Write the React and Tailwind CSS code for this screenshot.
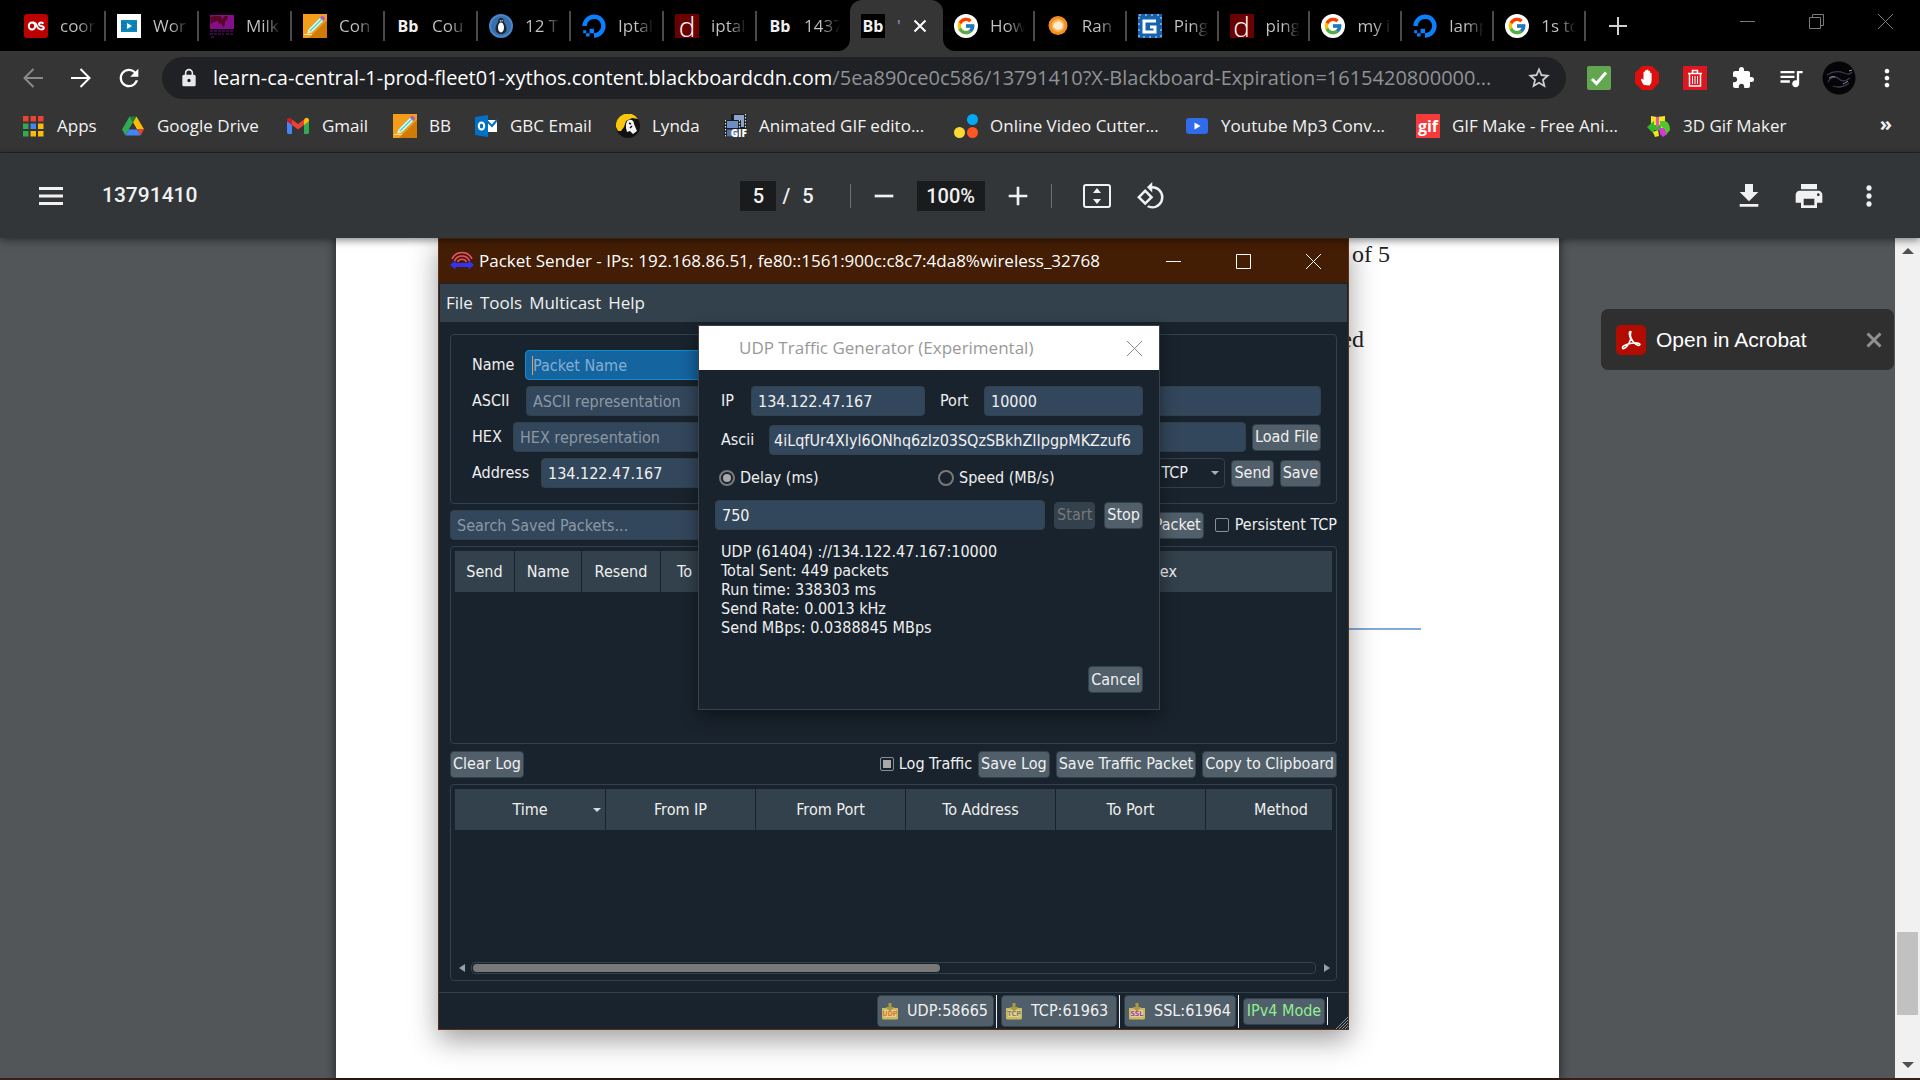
import React from "react";
import { FcGoogle } from "react-icons/fc";
import { FaDigitalOcean } from "react-icons/fa";
import {
  MdAdd,
  MdExtension,
  MdGetApp,
  MdLock,
  MdMoreVert,
  MdPrint,
  MdQueueMusic,
  MdRefresh,
  MdRemove,
  MdRotate90DegreesCcw,
  MdStarBorder,
} from "react-icons/md";

/* ---------- favicons ---------- */

const LastFm = () => (
  <span className="flex size-6 items-center justify-center rounded-[3px] bg-[#ba0000] text-white">
    <svg viewBox="0 0 24 24" className="size-6" fill="none" stroke="currentColor" strokeWidth="2">
      <ellipse cx="8" cy="12" rx="3.2" ry="3.600" />
      <path d="M19.400 9.600c-.5-.8-1.300-1.100-2.200-1.100-1.300 0-2.200.6-2.200 1.700 0 2.400 4.800 1.100 4.800 3.600 0 1.100-1 1.700-2.400 1.700-2.700 0-3.700-1.400-4.700-4-.7-1.900-1.800-3-3.900-3" />
    </svg>
  </span>
);

const PlayCard = () => (
  <svg viewBox="0 0 24 24" className="size-6">
    <rect width="24" height="24" fill="#fff" />
    <rect x="4" y="6" width="16" height="12" fill="#0e87bd" />
    <path d="M4 9h5M4 12h5M4 15h5M15 9h5M15 12h5M15 15h5" stroke="#0a6c9b" />
    <path d="M10 9v6l5-3z" fill="#fff" />
  </svg>
);

const Milk = () => (
  <svg viewBox="0 0 24 24" className="size-6">
    <rect x="0" y="1" width="24" height="14" fill="#850f8a" />
    <path d="M0 3l5-1h6l1 3 3-3h3l-1 4-2 1v4l-2 2-2-4-2 1-1-3-4 1-3 2z" fill="#5a0626" />
    <path d="M0 17h24M0 20h14M16 20h7M1 23h3" stroke="#4d0a55" strokeWidth="1.500" strokeDasharray="3 1" />
  </svg>
);

const Pencil = () => (
  <svg viewBox="0 0 24 24" className="size-6">
    <rect width="24" height="24" fill="#f59c1a" />
    <path d="M24 6v18H6z" fill="#cf7b06" />
    <path d="M4 20l1.500-5L17 3.500l3.500 3.500L9 18.500z" fill="#4fd6b8" />
    <path d="M6.500 15.500L17.500 4.500M8.500 17.500l11-11" stroke="#fff" strokeWidth="1.200" />
    <path d="M17 3.500l1.300-1.300a1.500 1.500 0 0 1 2 0l1.400 1.400a1.500 1.500 0 0 1 0 2L20.500 7z" fill="#b05bc4" />
    <path d="M4 20l1.500-5L9 18.500z" fill="#ffe3a8" />
    <path d="M1 20.500h8" stroke="#ffe3a8" />
  </svg>
);

const Bb = ({ boxed }) => (
  <span
    className={
      boxed
        ? "flex size-6 items-center justify-center bg-black text-base font-bold text-[#f0f0f0]"
        : "flex size-6 items-center justify-center text-base font-bold text-[#f0f0f0]"
    }
  >
    Bb
  </span>
);

const Penguin = () => (
  <svg viewBox="0 0 24 24" className="size-6">
    <circle cx="12" cy="12" r="12" fill="#4a86c8" />
    <circle cx="12" cy="12" r="10" fill="#3a6fae" />
    <path d="M12 4c-1.800 0-2.800 1.200-2.800 3 0 2-2.700 3.500-2.700 8 0 3.500 2.500 5 5.500 5s5.500-1.500 5.500-5c0-4.500-2.700-6-2.700-8 0-1.800-1-3-2.800-3z" fill="#1b2733" />
    <ellipse cx="12" cy="13.500" rx="3" ry="5" fill="#fff" />
    <path d="M10.800 6h.9v1.500h-.9zM12.700 6h.9v1.500h-.9z" fill="#fff" />
  </svg>
);

const Ocean = () => <FaDigitalOcean className="size-6 text-[#0a80ff]" />;

const LetterD = () => (
  <span className="flex size-6 items-center justify-center overflow-hidden bg-[#6b0000] font-['Open_Sans',sans-serif] text-[28px] leading-6 font-light text-white">
    d
  </span>
);

const Google = () => (
  <span className="flex size-6 items-center justify-center rounded-full bg-white">
    <FcGoogle className="size-5" />
  </span>
);

const Orange = () => (
  <svg viewBox="0 0 24 24" className="size-6">
    <circle cx="12" cy="11.500" r="9.500" fill="#f3901d" />
    <circle cx="12" cy="11.500" r="6.500" fill="#fbb65a" />
    <path d="M8 9l5-2 4 3-1 5-5 1-4-3z" fill="#fdebd0" />
  </svg>
);

const BlueG = () => (
  <svg viewBox="0 0 24 24" className="size-6">
    <rect width="24" height="24" fill="#1762ac" />
    <rect x="1" y="1" width="22" height="22" fill="none" stroke="#cfe2f5" strokeWidth="1" strokeDasharray="2 4" />
    <path d="M18 7H6v11h11v-5h-5" fill="none" stroke="#fff" strokeWidth="3" />
  </svg>
);

const TABS_LEFT = [
  { icon: LastFm, title: "coor" },
  { icon: PlayCard, title: "Wor" },
  { icon: Milk, title: "Milk" },
  { icon: Pencil, title: "Con" },
  { icon: Bb, title: "Cou" },
  { icon: Penguin, title: "12 T" },
  { icon: Ocean, title: "Iptal" },
  { icon: LetterD, title: "iptal" },
  { icon: Bb, title: "1437", last: true },
];

const TABS_RIGHT = [
  { icon: Google, title: "How" },
  { icon: Orange, title: "Ran" },
  { icon: BlueG, title: "Ping" },
  { icon: LetterD, title: "ping" },
  { icon: Google, title: "my i" },
  { icon: Ocean, title: "lamp" },
  { icon: Google, title: "1s to" },
];

function Tab({ icon: Icon, title, last }) {
  return (
    <button
      type="button"
      className={
        "flex h-[30px] min-w-0 flex-1 items-center gap-3 border-r-2 pr-2 pl-[11px] " +
        (last ? "border-transparent" : "border-[#4a4a4a]")
      }
    >
      <span className="shrink-0">
        <Icon />
      </span>
      <span className="min-w-0 flex-1 overflow-hidden bg-linear-to-r from-[#c4c4c4] from-50% to-transparent bg-clip-text text-left text-[17px] whitespace-nowrap text-transparent">
        {title}
      </span>
    </button>
  );
}

function TabStrip() {
  return (
    <div className="flex h-[51px] bg-black pl-[13px]">
      <div className="flex min-w-0 flex-[0_1_837px] items-center">
        {TABS_LEFT.map((t, i) => (
          <Tab key={i} {...t} />
        ))}
      </div>
      <div className="relative flex w-[93px] shrink-0 items-center gap-3 rounded-t-xl bg-[#353535] pl-[11px]">
        <svg viewBox="0 0 12 12" className="absolute bottom-0 -left-3 size-3 fill-[#353535]">
          <path d="M12 0v12H0A12 12 0 0 0 12 0z" />
        </svg>
        <svg viewBox="0 0 12 12" className="absolute -right-3 bottom-0 size-3 fill-[#353535]">
          <path d="M0 0v12h12A12 12 0 0 1 0 0z" />
        </svg>
        <Bb boxed />
        <span className="w-1 text-[17px] text-[#8f9bd0]">'</span>
        <button type="button" aria-label="Close tab">
          <svg viewBox="0 0 14 14" className="size-[14px]" stroke="#fff" strokeWidth="2">
            <path d="M1.500 1.500l11 11M12.500 1.500l-11 11" />
          </svg>
        </button>
      </div>
      <div className="flex min-w-0 flex-[0_1_643px] items-center">
        {TABS_RIGHT.map((t, i) => (
          <Tab key={i} {...t} />
        ))}
      </div>
      <button type="button" aria-label="New tab" className="ml-5 flex w-6 items-center justify-center">
        <svg viewBox="0 0 18 18" className="size-[18px]" stroke="#d0d0d0" strokeWidth="2">
          <path d="M9 0v18M0 9h18" />
        </svg>
      </button>
      <div className="ml-auto flex h-[42px] text-[#7a7a7a]">
        <button type="button" aria-label="Minimize" className="flex w-[69px] items-center justify-center">
          <svg viewBox="0 0 15 15" className="size-[15px]" stroke="currentColor">
            <path d="M0 7.500h15" />
          </svg>
        </button>
        <button type="button" aria-label="Restore" className="flex w-[69px] items-center justify-center">
          <svg viewBox="0 0 15 15" className="size-[15px]" stroke="currentColor" fill="none">
            <path d="M.5 3.500h11v11H.5zM3.500 3.500v-3h11v11h-3" />
          </svg>
        </button>
        <button type="button" aria-label="Close window" className="flex w-[69px] items-center justify-center">
          <svg viewBox="0 0 15 15" className="size-[15px]" stroke="currentColor">
            <path d="M0 0l15 15M15 0L0 15" />
          </svg>
        </button>
      </div>
    </div>
  );
}

/* ---------- address bar ---------- */

function AddressBar() {
  return (
    <div className="flex h-12 items-center px-[9px] pt-1.5">
      <button type="button" aria-label="Back" className="flex w-12 justify-center text-[#8a8a8a]">
        <svg viewBox="0 0 20 20" className="size-5" fill="none" stroke="currentColor" strokeWidth="2">
          <path d="M20 10H2M10.500 1L1.500 10l9 9" />
        </svg>
      </button>
      <button type="button" aria-label="Forward" className="flex w-12 justify-center text-white">
        <svg viewBox="0 0 20 20" className="size-5" fill="none" stroke="currentColor" strokeWidth="2">
          <path d="M0 10h18M9.500 1l9 9-9 9" />
        </svg>
      </button>
      <button type="button" aria-label="Reload" className="flex w-12 justify-center text-white">
        <MdRefresh className="size-7" />
      </button>
      <div className="ml-[9px] flex h-[42px] min-w-0 flex-1 items-center rounded-full bg-[#202124] pr-3.5 pl-[17px]">
        <MdLock className="size-5 shrink-0 text-[#e8e8e8]" />
        <span className="ml-3.5 min-w-0 flex-1 overflow-hidden text-[20px] whitespace-nowrap text-[#8f9296]">
          <span className="text-white">learn-ca-central-1-prod-fleet01-xythos.content.blackboardcdn.com</span>
          /5ea890ce0c586/13791410?X-Blackboard-Expiration=1615420800000...
        </span>
        <button type="button" aria-label="Bookmark this page" className="shrink-0">
          <MdStarBorder className="size-[26px] text-[#cfcfcf]" />
        </button>
      </div>
      <div className="ml-[9px] flex shrink-0 items-center text-white">
        <button type="button" aria-label="Check" className="flex w-12 justify-center">
          <svg viewBox="0 0 24 24" className="size-6">
            <rect width="24" height="24" rx="2" fill="#63a650" />
            <path d="M5 13l4.500 4.500L19 6.500" fill="none" stroke="#fff" strokeWidth="3" />
          </svg>
        </button>
        <button type="button" aria-label="Blocker" className="flex w-12 justify-center">
          <svg viewBox="0 0 24 24" className="size-6">
            <path d="M7 0h10l7 7v10l-7 7H7l-7-7V7z" fill="#e00f0f" />
            <path
              d="M9 19c-1.500-1.500-3-4.500-3-6 .8-.6 1.800 0 2.500 1V6.500c0-1.200 1.600-1.200 1.600 0V4.800c0-1.200 1.700-1.200 1.700 0V4.200c0-1.100 1.700-1.100 1.700 0v1.300c0-1 1.600-1 1.600 0v2c0-.9 1.500-.9 1.500 0V14c0 2.500-1 4-2 5.500z"
              fill="#fff"
            />
          </svg>
        </button>
        <button type="button" aria-label="Clear data" className="flex w-12 justify-center">
          <svg viewBox="0 0 24 24" className="size-6">
            <rect width="24" height="24" fill="#dd1620" />
            <path d="M5 7.500h14M9.500 7V4.500h5V7M6.500 8v12h11V8" fill="none" stroke="#fff" strokeWidth="1.500" />
            <path d="M9.500 10v8M12 10v8M14.500 10v8" stroke="#fff" />
          </svg>
        </button>
        <button type="button" aria-label="Extensions" className="flex w-12 justify-center">
          <MdExtension className="size-6" />
        </button>
        <button type="button" aria-label="Media" className="flex w-12 justify-center">
          <MdQueueMusic className="size-7" />
        </button>
        <button type="button" aria-label="Profile" className="flex w-12 justify-center">
          <svg viewBox="0 0 34 34" className="size-[34px]">
            <circle cx="17" cy="17" r="16.500" fill="#050507" />
            <path d="M5 14c6-4 12-4 17-2s6 1 8-1M6 21c3-6 8-6 11-3s7 2 11-1M11 25c5 2 12 1 16-3" fill="none" stroke="#3a3a52" strokeWidth="1.300" />
            <path d="M7 17c2-1 4-2 6-1M21 23c2-1 4-2 5-3M27 10l3-1" fill="none" stroke="#9a9ab0" />
          </svg>
        </button>
        <button type="button" aria-label="Menu" className="flex w-12 justify-center">
          <MdMoreVert className="size-7" />
        </button>
      </div>
    </div>
  );
}

/* ---------- bookmarks ---------- */

const AppsIcon = () => (
  <svg viewBox="0 0 24 24" className="size-6">
    {["#ea4335", "#ea4335", "#ea4335", "#34a853", "#4285f4", "#fbbc05", "#34a853", "#fbbc05", "#fbbc05"].map((c, i) => (
      <rect key={i} x={2 + (i % 3) * 7.500} y={2 + Math.floor(i / 3) * 7.500} width="5.500" height="5.500" fill={c} />
    ))}
  </svg>
);

const DriveIcon = () => (
  <svg viewBox="0 0 24 24" className="size-6">
    <path d="M8.500 2.500h7L12 8.600z" fill="#188038" />
    <path d="M8.500 2.500L12 8.600 4.500 21.500 1 15.400z" fill="#34a853" />
    <path d="M15.500 2.500L12 8.600l3.800 6.700H23z" fill="#fbbc04" />
    <path d="M23 15.300h-7.200l3.700 6.200z" fill="#ea4335" />
    <path d="M8.200 15.300h7.600l3.700 6.200h-15z" fill="#4285f4" />
    <path d="M12 8.600l3.800 6.700H8.200z" fill="#353535" />
  </svg>
);

const GmailIcon = () => (
  <svg viewBox="0 0 24 24" className="size-6">
    <path d="M1 7v11.500c0 .9.600 1.500 1.500 1.500H6V10z" fill="#4285f4" />
    <path d="M18 10v10h3.500c.9 0 1.500-.6 1.500-1.500V7z" fill="#34a853" />
    <path d="M18 5.500V11l5-3.700V6c0-2-2.200-3-3.800-1.800z" fill="#fbbc04" />
    <path d="M6 11V5.500l6 4.500 6-4.500V11l-6 4.500z" fill="#ea4335" />
    <path d="M1 6v1.300L6 11V5.500L4.800 4.200C3.200 3 1 4 1 6z" fill="#c5221f" />
  </svg>
);

const OutlookIcon = () => (
  <svg viewBox="0 0 24 24" className="size-6">
    <path d="M13 6h10v12H13z" fill="#fff" />
    <path d="M13 7l5 5 5-6" stroke="#0072c6" strokeWidth="2" fill="none" />
    <path d="M1 3l13-2v22L1 21z" fill="#0072c6" />
    <ellipse cx="7.500" cy="12" rx="2.700" ry="3.600" fill="none" stroke="#fff" strokeWidth="2" />
  </svg>
);

const LyndaIcon = () => (
  <svg viewBox="0 0 24 24" className="size-6">
    <circle cx="12" cy="12" r="12" fill="#111" />
    <path d="M0 13A12 12 0 0 1 22 5l-6-1-6 3-2 6-3 4H2z" fill="#f9c80e" />
    <path d="M13 6c3-1 5 1 5 4l3 7-4 3-3-3-3 1-1-4c0-4 0-7 3-8z" fill="#f5f5f5" />
    <path d="M13 9l2 1M16 12l-2 2" stroke="#111" strokeWidth="1.500" />
  </svg>
);

const GifFilmIcon = () => (
  <span className="relative flex size-6 items-end justify-end">
    <svg viewBox="0 0 24 24" className="absolute inset-0 size-6">
      <rect x="8" y="0" width="16" height="15" fill="#1c1c1c" />
      <rect x="11" y="1" width="10" height="12" fill="#8aa4cf" />
      <rect x="1" y="6" width="17" height="17" fill="#1c1c1c" />
      <rect x="4" y="7" width="11" height="7" fill="#6d8ec4" />
      <rect x="4" y="15.500" width="11" height="7" fill="#55719f" />
      <path d="M2.500 6v17M16.500 6v9M22.500 0v15" stroke="#ddd" strokeWidth="1.200" strokeDasharray="1.500 1.500" />
    </svg>
    <span className="relative text-[10px] leading-[10px] font-extrabold text-white">GIF</span>
  </span>
);

const DotsIcon = () => (
  <svg viewBox="0 0 24 24" className="size-6">
    <circle cx="18.500" cy="5.500" r="5.500" fill="#03a9f4" />
    <circle cx="5.500" cy="18.500" r="5.500" fill="#fdd835" />
    <circle cx="18.500" cy="18.500" r="5.500" fill="#ff5722" />
  </svg>
);

const VideoIcon = () => (
  <svg viewBox="0 0 24 24" className="size-6">
    <rect x="1" y="4" width="22" height="16" rx="3" fill="#2f6bea" />
    <path d="M9.500 8.500v7l6-3.500z" fill="#fff" />
  </svg>
);

const GifIcon = () => (
  <span className="flex size-6 items-center justify-center bg-[#f43a3a] text-base leading-6 font-bold text-white">gif</span>
);

const KnotIcon = () => (
  <svg viewBox="0 0 24 24" className="size-6">
    <path d="M4 2l6 1 8-1v12l-4 1-5-2-5 1z" fill="#f7e51b" />
    <path d="M0 13l7-6v4h7v5H7v4z" fill="#35b52a" />
    <path d="M13 7h4c5 0 6 6 6 9l-4 5-5-5 2 0c0-3-1-4-3-4z" fill="#53c62c" />
    <path d="M12 14h5l3 6-4 3-3-3z" fill="#d53ad5" />
    <path d="M6 18l5-2 1 6-4 1z" fill="#f7e51b" />
    <path d="M9 3l3 0v9l-3 1z" fill="#e055c0" />
  </svg>
);

const BOOKMARKS = [
  { icon: AppsIcon, label: "Apps", w: "w-[100px]" },
  { icon: DriveIcon, label: "Google Drive", w: "w-[165px]" },
  { icon: GmailIcon, label: "Gmail", w: "w-[107px]" },
  { icon: Pencil, label: "BB", w: "w-[81px]" },
  { icon: OutlookIcon, label: "GBC Email", w: "w-[142px]" },
  { icon: LyndaIcon, label: "Lynda", w: "w-[107px]" },
  { icon: GifFilmIcon, label: "Animated GIF edito...", w: "w-[231px]" },
  { icon: DotsIcon, label: "Online Video Cutter...", w: "w-[231px]" },
  { icon: VideoIcon, label: "Youtube Mp3 Conv...", w: "w-[231px]" },
  { icon: GifIcon, label: "GIF Make - Free Ani...", w: "w-[231px]" },
  { icon: KnotIcon, label: "3D Gif Maker", w: "w-[150px]" },
];

function Bookmarks() {
  return (
    <div className="flex h-[54px] items-center border-b border-[#232323] pr-7 pl-[21px] text-[17px] text-[#f2f2f2]">
      {BOOKMARKS.map(({ icon: Icon, label, w }) => (
        <a key={label} href="#" className={"flex shrink-0 items-center gap-3 whitespace-nowrap " + w}>
          <Icon />
          {label}
        </a>
      ))}
      <button type="button" aria-label="More bookmarks" className="ml-auto pb-1 text-xl font-bold">
        »
      </button>
    </div>
  );
}

/* ---------- PDF toolbar ---------- */

function PdfToolbar() {
  return (
    <div className="relative z-10 grid h-[85px] grid-cols-[1fr_auto_1fr] items-center bg-[#323639] px-[33px] font-['Roboto',sans-serif] text-[20px] font-medium text-[#f1f1f1] shadow-[0_2px_8px_rgba(0,0,0,0.5)]">
      <div className="flex items-center">
        <button type="button" aria-label="Outline" className="mr-[33px] flex w-9 justify-center">
          <svg viewBox="0 0 24 18" className="h-[18px] w-6" stroke="currentColor" strokeWidth="3">
            <path d="M0 1.500h24M0 9h24M0 16.500h24" />
          </svg>
        </button>
        <span className="text-[21px]">13791410</span>
      </div>
      <div className="mr-3.5 flex items-center">
        <input aria-label="Page" defaultValue="5" className="h-[30px] w-9 bg-[#191b1c] text-center outline-none" />
        <span className="ml-1.5">/</span>
        <span className="ml-3">5</span>
        <span className="ml-9 h-6 w-px bg-[#6d7073]" />
        <button type="button" aria-label="Zoom out" className="ml-[17px] flex w-8 justify-center">
          <MdRemove className="size-8" />
        </button>
        <input aria-label="Zoom" defaultValue="100%" className="ml-[17px] h-[30px] w-[68px] bg-[#191b1c] text-center outline-none" />
        <button type="button" aria-label="Zoom in" className="ml-[17px] flex w-8 justify-center">
          <MdAdd className="size-8" />
        </button>
        <span className="ml-[17px] h-6 w-px bg-[#6d7073]" />
        <button type="button" aria-label="Fit to page" className="ml-[31px]">
          <svg viewBox="0 0 28 24" className="h-6 w-7" fill="none" stroke="currentColor" strokeWidth="2">
            <rect x="1" y="1" width="26" height="22" rx="2" />
            <path d="M14 4l4 5h-8zM14 20l4-5h-8z" fill="currentColor" stroke="none" />
          </svg>
        </button>
        <button type="button" aria-label="Rotate" className="ml-[25px]">
          <MdRotate90DegreesCcw className="size-[30px]" />
        </button>
      </div>
      <div className="flex items-center justify-end">
        <button type="button" aria-label="Download" className="flex w-[60px] justify-center">
          <MdGetApp className="size-8" />
        </button>
        <button type="button" aria-label="Print" className="flex w-[60px] justify-center">
          <MdPrint className="size-8" />
        </button>
        <button type="button" aria-label="More actions" className="-mr-3 flex w-[60px] justify-center">
          <MdMoreVert className="size-8" />
        </button>
      </div>
    </div>
  );
}

/* ---------- Packet Sender ---------- */

const field =
  "h-[30px] min-w-0 rounded-[4px] border border-[#32414b] bg-[#33475c] px-1.5 text-base text-[#f0f0f0] outline-none placeholder:text-[#8b98a4]";

function Btn({ children, disabled }) {
  return (
    <button
      type="button"
      disabled={disabled}
      className="h-[27px] shrink-0 rounded-[4px] border border-[#32414b] bg-[#505f69] px-0.5 text-base leading-6 whitespace-nowrap text-[#f0f0f0] disabled:bg-[#32414b] disabled:text-[#787878]"
    >
      {children}
    </button>
  );
}

function PacketForm() {
  return (
    <form className="flex flex-col gap-1.5 rounded-[4px] border border-[#32414b] pt-[15px] pr-[15px] pb-[15px] pl-[21px]">
      <div className="relative flex items-center">
        <label htmlFor="p-name" className="w-[53px]">Name</label>
        <input
          id="p-name"
          placeholder="Packet Name"
          className="h-[30px] w-[500px] rounded-[4px] border border-[#148cd2] bg-[#1464a0] px-[7px] text-base outline-none placeholder:text-[#84aed0]"
        />
        <span className="absolute top-1.5 left-[60px] h-[19px] w-px bg-[#f29a4a]" />
      </div>
      <div className="flex items-center">
        <label htmlFor="p-ascii" className="w-[54px]">ASCII</label>
        <input id="p-ascii" placeholder="ASCII representation" className={field + " flex-1"} />
      </div>
      <div className="flex items-center">
        <label htmlFor="p-hex" className="w-[41px]">HEX</label>
        <input id="p-hex" placeholder="HEX representation" className={field + " mr-1.5 flex-1"} />
        <Btn>Load File</Btn>
      </div>
      <div className="flex items-center gap-1.5">
        <label htmlFor="p-addr" className="w-[63px]">Address</label>
        <input id="p-addr" defaultValue="134.122.47.167" className={field + " flex-1"} />
        <span className="relative flex">
          <select aria-label="Protocol" className="h-[30px] w-[78px] appearance-none rounded-[4px] border border-[#32414b] bg-[#19232d] pl-[13px] outline-none">
            <option>TCP</option>
          </select>
          <svg viewBox="0 0 8 4" className="absolute top-[13px] right-1.5 h-1 w-2 fill-[#a8b0b6]">
            <path d="M0 0h8L4 4z" />
          </svg>
        </span>
        <Btn>Send</Btn>
        <Btn>Save</Btn>
      </div>
    </form>
  );
}

const th = "h-[41px] border-r border-[#19232d] bg-[#32414b] p-0 text-center font-normal last:border-r-0";

function SavedPackets() {
  return (
    <div className="mt-1.5 h-[198px] rounded-[4px] border border-[#32414b] p-1">
      <table className="w-full table-fixed border-separate border-spacing-0">
        <thead>
          <tr>
            <th className={th + " w-[60px]"}>Send</th>
            <th className={th + " w-[67px]"}>Name</th>
            <th className={th + " w-[79px]"}>Resend</th>
            <th className={th + " w-[48px]"}>To</th>
            <th className={th + " w-[285px]"} aria-label="Details" />
            <th className={th}>Hex</th>
          </tr>
        </thead>
      </table>
    </div>
  );
}

function TrafficLog() {
  return (
    <div className="flex h-[197px] flex-col rounded-[4px] border border-[#32414b] p-1">
      <div className="overflow-hidden">
        <table className="w-[901px] table-fixed border-separate border-spacing-0">
          <thead>
            <tr>
              <th className={th + " w-[151px]"}>
                <span className="relative flex items-center justify-center">
                  Time
                  <svg viewBox="0 0 8 4" className="absolute right-1 h-1 w-2 fill-[#d8dcdf]">
                    <path d="M0 0h8L4 4z" />
                  </svg>
                </span>
              </th>
              <th className={th}>From IP</th>
              <th className={th}>From Port</th>
              <th className={th}>To Address</th>
              <th className={th}>To Port</th>
              <th className={th}>Method</th>
            </tr>
          </thead>
        </table>
      </div>
      <div className="mt-auto mb-0.5 flex items-center gap-1.5 pl-1">
        <svg viewBox="0 0 6 8" className="h-2 w-1.5 fill-[#9aa0a4]">
          <path d="M6 0v8L0 4z" />
        </svg>
        <div className="flex h-3 flex-1 rounded-[4px] border border-[#32414b] p-px">
          <div className="w-[467px] rounded-[4px] bg-[#787878]" />
        </div>
        <svg viewBox="0 0 6 8" className="mr-0.5 ml-0.5 h-2 w-1.5 fill-[#9aa0a4]">
          <path d="M0 0v8l6-4z" />
        </svg>
      </div>
    </div>
  );
}

function InboxIcon({ label, color }) {
  return (
    <span className="relative flex h-[18px] w-[18px] items-end justify-center">
      <svg viewBox="0 0 18 18" className="absolute inset-0 size-[18px]">
        <path d="M1 6h16v10a1.500 1.500 0 0 1-1.500 1.500h-13A1.500 1.500 0 0 1 1 16z" fill="#c9bb62" />
        <path d="M3 8h12v7H3z" fill="#e0d48a" />
        <path d="M7.500 1h3v4h3L9 9.500 4.500 5h3z" fill="#a99a3c" />
      </svg>
      <span className={"relative pb-0.5 text-[7px] leading-[8px] font-bold " + color}>{label}</span>
    </span>
  );
}

function StatusButton({ label, color, children, w }) {
  return (
    <div className="flex h-[33px] items-center border-r border-[#f0f0f0] pr-0.5">
      <button
        type="button"
        className={"flex h-8 items-center gap-2 rounded-[4px] border border-[#32414b] bg-[#505f69] pl-[3px] text-base text-[#f0f0f0] " + w}
      >
        <InboxIcon label={label} color={color} />
        {children}
      </button>
    </div>
  );
}

function StatusBar() {
  return (
    <div className="mt-[11px] flex h-[37px] items-center justify-end gap-1 border-t border-[#32414b] pr-5">
      <StatusButton label="UDP" color="text-[#e0763a]" w="w-[117px]">UDP:58665</StatusButton>
      <StatusButton label="TCP" color="text-[#8b7a70]" w="w-[116px]">TCP:61963</StatusButton>
      <StatusButton label="SSL" color="text-[#b03ab8]" w="w-[112px]">SSL:61964</StatusButton>
      <div className="flex h-[28px] items-center border-r border-[#f0f0f0] pr-0.5">
        <button type="button" className="h-[27px] w-[82px] rounded-[4px] border border-[#32414b] bg-[#505f69] leading-6 whitespace-nowrap text-[#90ee90]">
          IPv4 Mode
        </button>
      </div>
      <svg viewBox="0 0 12 12" className="absolute right-0 bottom-0 size-3" stroke="#8a949b">
        <path d="M0 12L12 0M3 12l9-9M6 12l6-6M9 12l3-3" />
      </svg>
    </div>
  );
}

const radio =
  "size-4 appearance-none rounded-full border-2 border-[#787878] bg-transparent checked:bg-[#a9a9a9] checked:bg-clip-content checked:p-0.5";

function TrafficDialog() {
  return (
    <div
      role="dialog"
      aria-label="UDP Traffic Generator"
      className="absolute top-[86px] left-[259px] flex h-[385px] w-[462px] flex-col border border-[#3c4248] bg-[#19232d] shadow-[0_6px_16px_rgba(0,0,0,0.45)]"
    >
      <div className="flex h-11 shrink-0 items-center bg-white pr-[17px] pl-10 font-['Open_Sans','Noto_Sans',sans-serif] text-[17px] text-[#999]">
        UDP Traffic Generator (Experimental)
        <button type="button" aria-label="Close dialog" className="ml-auto">
          <svg viewBox="0 0 15 15" className="size-[15px]" stroke="#8a8a8a">
            <path d="M0 0l15 15M15 0L0 15" />
          </svg>
        </button>
      </div>
      <form className="flex flex-1 flex-col pr-4 pb-4 pl-4">
        <div className="mt-4 flex items-center pl-1.5">
          <label htmlFor="d-ip" className="w-[30px]">IP</label>
          <input id="d-ip" defaultValue="134.122.47.167" className={field + " w-[174px]"} />
          <label htmlFor="d-port" className="ml-[15px] w-11">Port</label>
          <input id="d-port" defaultValue="10000" className={field + " flex-1"} />
        </div>
        <div className="mt-[9px] flex items-center pl-1.5">
          <label htmlFor="d-ascii" className="w-12">Ascii</label>
          <input
            id="d-ascii"
            defaultValue="4iLqfUr4XIyl6ONhq6zIz03SQzSBkhZIIpgpMKZzuf6"
            className="h-[30px] min-w-0 flex-1 rounded-[4px] border border-[#32414b] bg-[#33475c] px-1 text-base text-[#f0f0f0] outline-none"
          />
        </div>
        <div className="mt-[11px] grid h-6 grid-cols-[219px_1fr] items-center pl-1">
          <label className="flex items-center gap-[5px]">
            <input type="radio" name="mode" defaultChecked className={radio} />
            Delay (ms)
          </label>
          <label className="flex items-center gap-[5px]">
            <input type="radio" name="mode" className={radio} />
            Speed (MB/s)
          </label>
        </div>
        <div className="mt-2.5 flex items-center gap-[9px]">
          <input aria-label="Delay" defaultValue="750" className={field + " flex-1"} />
          <Btn disabled>Start</Btn>
          <Btn>Stop</Btn>
        </div>
        <p className="mt-3 pl-1.5 leading-[19px]">
          UDP (61404) ://134.122.47.167:10000
          <br />
          Total Sent: 449 packets
          <br />
          Run time: 338303 ms
          <br />
          Send Rate: 0.0013 kHz
          <br />
          Send MBps: 0.0388845 MBps
        </p>
        <div className="mt-auto flex justify-end">
          <Btn>Cancel</Btn>
        </div>
      </form>
    </div>
  );
}

function PacketSender() {
  return (
    <section className="relative min-w-0 flex-1 self-start border border-[#5c3015] bg-[#19232d] font-['DejaVu_Sans_Condensed','Noto_Sans',sans-serif] text-base text-[#f0f0f0] shadow-[0_10px_26px_rgba(0,0,0,0.38)]">
      <header className="flex h-11 items-center bg-[#431d04] pl-[11px] font-['Open_Sans','Noto_Sans',sans-serif] text-[17px] text-white">
        <svg viewBox="0 0 24 20" className="mr-[5px] h-5 w-6 shrink-0" fill="none">
          <path
            d="M2 8C4 3.500 8 1.500 12 1.500S20 3.500 22 8M4.500 10C6 6.500 9 5 12 5s6 1.500 7.500 5M7.500 11C8.500 9 10 8.200 12 8.200s3.500.8 4.500 2.800"
            stroke="#ea4f6b"
            strokeWidth="1.600"
          />
          <path d="M0 14l5.500-4.500V12h13V9.500L24 14l-5.500 4.500V16h-13v2.500z" fill="#3333f0" />
        </svg>
        <h1 className="whitespace-nowrap">Packet Sender - IPs: 192.168.86.51, fe80::1561:900c:c8c7:4da8%wireless_32768</h1>
        <div className="ml-auto flex">
          <button type="button" aria-label="Minimize Packet Sender" className="flex w-[70px] items-center justify-center">
            <svg viewBox="0 0 15 15" className="size-[15px]" stroke="currentColor">
              <path d="M0 7.500h15" />
            </svg>
          </button>
          <button type="button" aria-label="Maximize Packet Sender" className="flex w-[70px] items-center justify-center">
            <svg viewBox="0 0 15 15" className="size-[15px]" stroke="currentColor" fill="none">
              <path d="M.5.5h14v14H.5z" />
            </svg>
          </button>
          <button type="button" aria-label="Close Packet Sender" className="flex w-[70px] items-center justify-center">
            <svg viewBox="0 0 15 15" className="size-[15px]" stroke="currentColor">
              <path d="M0 0l15 15M15 0L0 15" />
            </svg>
          </button>
        </div>
      </header>
      <nav className="mx-px mt-px flex h-[38px] items-center gap-[7px] bg-[#32414b] pl-1.5 font-['Open_Sans','Noto_Sans',sans-serif] text-[17px]">
        <button type="button">File</button>
        <button type="button">Tools</button>
        <button type="button">Multicast</button>
        <button type="button">Help</button>
      </nav>
      <div className="px-[11px] pt-3">
        <PacketForm />
        <div className="mt-1.5 flex items-center">
          <input aria-label="Search" placeholder="Search Saved Packets..." className={field + " mr-1.5 flex-1"} />
          <Btn>Delete Saved Packet</Btn>
          <label className="ml-[11px] flex items-center gap-1.5 whitespace-nowrap">
            <input type="checkbox" className="size-[14px] appearance-none rounded-[2px] border border-[#8a8f93]" />
            Persistent TCP
          </label>
        </div>
        <SavedPackets />
        <div className="flex h-10 items-center gap-1.5">
          <Btn>Clear Log</Btn>
          <label className="ml-auto flex items-center gap-[5px] whitespace-nowrap">
            <input
              type="checkbox"
              defaultChecked
              className="size-[14px] appearance-none rounded-[2px] border border-[#8a8f93] checked:bg-[#a9a9a9] checked:bg-clip-content checked:p-0.5"
            />
            Log Traffic
          </label>
          <Btn>Save Log</Btn>
          <Btn>Save Traffic Packet</Btn>
          <Btn>Copy to Clipboard</Btn>
        </div>
        <TrafficLog />
      </div>
      <StatusBar />
      <TrafficDialog />
    </section>
  );
}

/* ---------- document ---------- */

function Document() {
  return (
    <article className="mx-auto flex w-full max-w-[1223px] bg-white pl-[102px] shadow-[0_0_8px_2px_rgba(0,0,0,0.45)]">
      <PacketSender />
      <div className="w-[210px] shrink-0 overflow-hidden font-['Liberation_Serif',serif] text-[24px] leading-8 text-[#222]">
        <p className="pl-[3px]">of 5</p>
        <div className="mt-[53px] flex w-[15px] justify-end overflow-hidden">
          <span>ed</span>
        </div>
        <hr className="mt-[273px] w-[72px] border-t-2 border-[#82abd6]" />
      </div>
    </article>
  );
}

function AcrobatPrompt() {
  return (
    <div className="absolute top-[71px] right-px flex h-[61px] w-[293px] items-center rounded-[7px] bg-[#2f2f2f] pr-2.5 pl-[15px] font-['Liberation_Sans',sans-serif] text-[21px] text-white">
      <svg viewBox="0 0 30 30" className="mr-2.5 size-[30px]">
        <rect width="30" height="30" rx="5" fill="#b30b00" />
        <path
          d="M14.500 6.500c-1.800 0-1.300 4 .3 7.500-1.500 4-4.300 8.500-6.800 9.500-2 .5-2.200-1.500 0-2.700 4-2.300 11-3.600 14.500-2.600 2.500.8 1.400 2.700-.6 2-3-1-7-5-7.500-9.500-.2-2.500 1-4.200.1-4.200z"
          fill="none"
          stroke="#fff"
          strokeWidth="1.600"
        />
      </svg>
      <a href="#" className="whitespace-nowrap">Open in Acrobat</a>
      <button type="button" aria-label="Dismiss" className="ml-auto">
        <svg viewBox="0 0 20 20" className="size-5" stroke="#919191" strokeWidth="3">
          <path d="M3.500 3.500l13 13M16.500 3.500l-13 13" />
        </svg>
      </button>
    </div>
  );
}

function Scrollbar() {
  return (
    <div className="flex w-[25px] shrink-0 flex-col items-center bg-[#f1f1f1] pt-2.5 pb-[10px]">
      <svg viewBox="0 0 12 6" className="h-1.5 w-3 fill-[#505050]">
        <path d="M0 6h12L6 0z" />
      </svg>
      <div className="mt-auto mb-[47px] h-[83px] w-[21px] bg-[#c1c1c1]" />
      <svg viewBox="0 0 12 6" className="h-1.5 w-3 fill-[#505050]">
        <path d="M0 0h12L6 6z" />
      </svg>
    </div>
  );
}

export default function App() {
  return (
    <div className="flex h-screen flex-col overflow-hidden bg-[#353535] font-['Open_Sans','Noto_Sans',sans-serif]">
      <TabStrip />
      <AddressBar />
      <Bookmarks />
      <PdfToolbar />
      <main className="flex min-h-0 flex-1 bg-[#525659]">
        <div className="relative flex min-w-0 flex-1">
          <Document />
          <AcrobatPrompt />
        </div>
        <Scrollbar />
      </main>
      <footer className="h-0.5 shrink-0 bg-[#35211a]" />
    </div>
  );
}
